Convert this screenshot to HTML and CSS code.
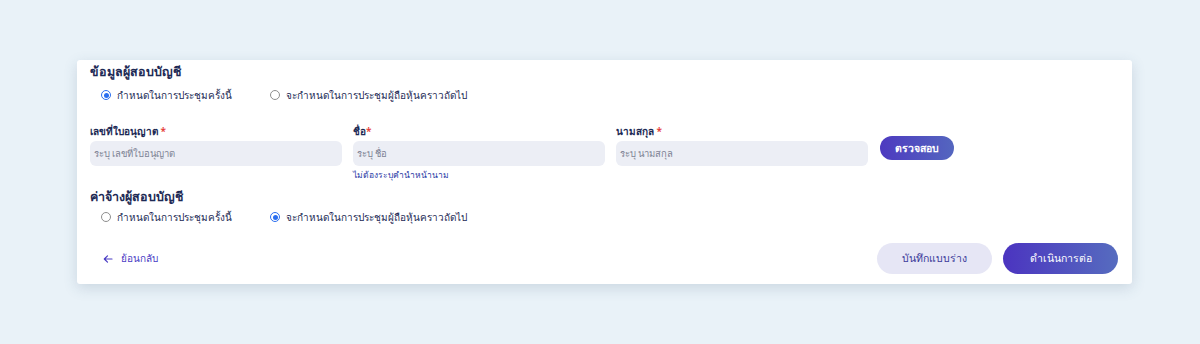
FILE: index.html
```html
<!DOCTYPE html>
<html lang="th">
<head>
    <meta charset="UTF-8">
    <meta name="viewport" content="width=device-width, initial-scale=1.0">
    <title>ข้อมูลผู้สอบบัญชี</title>
    <link rel="stylesheet" href="styles.css">
</head>
<body>

<div class="card">
    <div class="section-title">ข้อมูลผู้สอบบัญชี</div>
    <div class="radio-row">
        <label class="radio checked"><span class="dot"></span>กำหนดในการประชุมครั้งนี้</label>
        <label class="radio"><span class="dot"></span>จะกำหนดในการประชุมผู้ถือหุ้นคราวถัดไป</label>
    </div>

    <div class="fields">
        <div class="field">
            <div class="label">เลขที่ใบอนุญาต <span class="req">*</span></div>
            <div class="input">ระบุ เลขที่ใบอนุญาต</div>
        </div>
        <div class="field">
            <div class="label">ชื่อ<span class="req">*</span></div>
            <div class="input">ระบุ ชื่อ</div>
            <div class="hint">ไม่ต้องระบุคำนำหน้านาม</div>
        </div>
        <div class="field">
            <div class="label">นามสกุล <span class="req">*</span></div>
            <div class="input">ระบุ นามสกุล</div>
        </div>
        <button class="btn-check">ตรวจสอบ</button>
    </div>

    <div class="section-title second">ค่าจ้างผู้สอบบัญชี</div>
    <div class="radio-row second">
        <label class="radio"><span class="dot"></span>กำหนดในการประชุมครั้งนี้</label>
        <label class="radio checked"><span class="dot"></span>จะกำหนดในการประชุมผู้ถือหุ้นคราวถัดไป</label>
    </div>

    <div class="footer">
        <a class="back" href="#">
            <svg width="10" height="10" viewBox="0 0 10 10"><path d="M9 5H1.5M4.5 1.8L1.3 5l3.2 3.2" fill="none" stroke="currentColor" stroke-width="1.2" stroke-linecap="round" stroke-linejoin="round"/></svg>
            ย้อนกลับ
        </a>
        <div class="actions">
            <button class="btn-draft">บันทึกแบบร่าง</button>
            <button class="btn-next">ดำเนินการต่อ</button>
        </div>
    </div>
</div>

</body>
</html>
```

FILE: styles.css
```css
body {
    margin: 0;
    background-color: #e9f2f8;
    font-family: "Noto Sans", "Noto Sans CJK SC", sans-serif;
    height: 344px;
    overflow: hidden;
}

.card {
    margin: 60px 0 0 77px;
    width: 1055px;
    height: 224px;
    box-sizing: border-box;
    background-color: #fff;
    border-radius: 3px;
    box-shadow: 0 4px 14px rgba(60, 90, 120, 0.18);
    padding: 3px 14px 0 13px;
}

.section-title {
    font-size: 12.5px;
    line-height: 18px;
    font-weight: 600;
    color: #1d2a55;
}

.section-title.second {
    margin-top: 6px;
}

.radio-row {
    display: flex;
    padding-left: 11px;
    margin-top: 6px;
    height: 16px;
    align-items: center;
}

.radio-row.second {
    margin-top: 3px;
}

.radio {
    display: flex;
    align-items: center;
    font-size: 10px;
    color: #1d2a55;
    white-space: nowrap;
}

.radio:first-child {
    width: 169px;
}

.radio .dot {
    width: 8px;
    height: 8px;
    border: 1px solid #8e8e8e;
    border-radius: 50%;
    margin-right: 6px;
    position: relative;
}

.radio.checked .dot {
    border-color: #2a6ef0;
}

.radio.checked .dot::after {
    content: "";
    position: absolute;
    left: 1.5px;
    top: 1.5px;
    width: 5px;
    height: 5px;
    border-radius: 50%;
    background-color: #2a6ef0;
}

.fields {
    display: flex;
    align-items: flex-start;
    gap: 11px;
    margin-top: 21px;
    height: 58px;
}

.field {
    width: 252px;
}

.label {
    font-size: 10px;
    line-height: 14px;
    font-weight: 600;
    color: #1d2a55;
    margin-bottom: 3px;
}

.req {
    color: #e53935;
}

.input {
    height: 25px;
    border-radius: 6px;
    background-color: #eceef5;
    font-size: 9.5px;
    color: #7d8294;
    padding-left: 4px;
    display: flex;
    align-items: center;
}

.hint {
    font-size: 8.5px;
    line-height: 12px;
    color: #2b3aa6;
    margin-top: 3px;
}

button {
    font-family: inherit;
    border: none;
    cursor: pointer;
    border-radius: 16px;
}

.btn-check {
    margin-top: 12px;
    margin-left: 1px;
    width: 74px;
    height: 24px;
    font-size: 10.5px;
    font-weight: 600;
    color: #fff;
    background: linear-gradient(90deg, #4d3ac0, #5466bf);
    border-radius: 12px;
}

.footer {
    display: flex;
    justify-content: space-between;
    align-items: center;
    margin-top: 18px;
}

.back {
    display: flex;
    align-items: center;
    gap: 8px;
    margin-left: 13px;
    font-size: 10px;
    font-weight: 500;
    color: #4a3cc4;
    text-decoration: none;
}

.actions {
    display: flex;
    gap: 11px;
}

.btn-draft,
.btn-next {
    width: 115px;
    height: 31px;
    font-size: 10.5px;
    font-weight: 500;
}

.btn-draft {
    background-color: #e6e6f5;
    color: #3a3a9a;
}

.btn-next {
    color: #fff;
    background: linear-gradient(90deg, #4b34c0, #566cbf);
}
```
